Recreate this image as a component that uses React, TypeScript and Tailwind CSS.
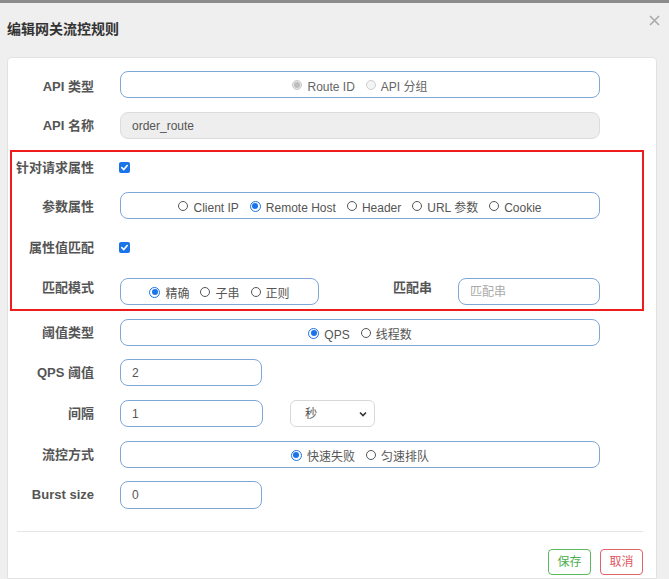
import React from "react";

const font = { fontFamily: '"Liberation Sans", Arial, "Noto Sans CJK SC", sans-serif' };

function Radio({ checked, disabled, label }: { checked?: boolean; disabled?: boolean; label: string }) {
  let circle: React.ReactNode;
  if (disabled) {
    circle = checked ? (
      <span className="w-[10px] h-[10px] rounded-full border border-[#c8c8c8] bg-[#e8e8e8] flex items-center justify-center">
        <span className="w-[6px] h-[6px] rounded-full bg-[#bdbdbd]" />
      </span>
    ) : (
      <span className="w-[10px] h-[10px] rounded-full border border-[#cfcfcf] bg-[#f4f4f4]" />
    );
  } else {
    circle = checked ? (
      <span className="w-[11px] h-[11px] rounded-full border-[1.5px] border-[#1a73e8] bg-white flex items-center justify-center">
        <span className="w-[6px] h-[6px] rounded-full bg-[#1a73e8]" />
      </span>
    ) : (
      <span className="w-[10px] h-[10px] rounded-full border border-[#555] bg-white" />
    );
  }
  return (
    <span className="flex items-center gap-[5px]">
      <span className="-translate-y-[2px] flex">{circle}</span>
      <span className={disabled ? "text-[#666]" : "text-[#555]"}>{label}</span>
    </span>
  );
}

function Checkbox() {
  return (
    <span className="w-[11px] h-[11px] rounded-[2px] bg-[#1a73e8] flex items-center justify-center">
      <svg width="9" height="9" viewBox="0 0 10 10">
        <path d="M2 5.2 L4.2 7.3 L8 2.8" fill="none" stroke="white" strokeWidth="1.8" strokeLinecap="round" strokeLinejoin="round" />
      </svg>
    </span>
  );
}

function Label({ children, w = "w-[86px]", extra = "" }: { children: React.ReactNode; w?: string; extra?: string }) {
  return (
    <div className={`${w} ${extra} shrink-0 text-right text-[13px] font-bold text-[#555] whitespace-nowrap`}>{children}</div>
  );
}

function RadioBox({ children, w = "w-[480px]" }: { children: React.ReactNode; w?: string }) {
  return (
    <div className={`${w} h-[27px] rounded-[8px] border border-[#7fa7d6] bg-white flex items-center justify-center gap-[11px] pt-[5px] text-[12px]`}>
      {children}
    </div>
  );
}

function TextBox({ value, placeholder, w = "w-[142px]", h = "h-[27px]" }: { value?: string; placeholder?: string; w?: string; h?: string }) {
  return (
    <div className={`${w} ${h} rounded-[8px] border border-[#7fa7d6] bg-white flex items-center px-[11px] text-[12px]`}>
      {value ? <span className="text-[#555]">{value}</span> : <span className="text-[#aaa]">{placeholder}</span>}
    </div>
  );
}

export default function App() {
  return (
    <div className="w-[669px] h-[579px] overflow-hidden bg-[#efefef] border-t-[3px] border-[#8c8c8c] flex flex-col" style={font}>
      <div className="h-[54px] shrink-0 flex items-start justify-between pl-[7px] pr-[9px]">
        <div className="mt-[16px] text-[14px] font-bold text-[#333]">编辑网关流控规则</div>
        <svg className="mt-[12px]" width="11" height="11" viewBox="0 0 11 11">
          <path d="M1 1 L10 10 M10 1 L1 10" stroke="#aaa" strokeWidth="1.6" />
        </svg>
      </div>
      <div className="ml-[7px] w-[650px] flex-1 bg-white border border-[#e2e2e2] rounded-t-[4px] flex flex-col pt-[13px]">
        {/* API 类型 */}
        <div className="flex items-center gap-[26px] h-[27px]">
          <Label extra="pt-[4px]">API 类型</Label>
          <RadioBox>
            <Radio checked disabled label="Route ID" />
            <Radio disabled label="API 分组" />
          </RadioBox>
        </div>
        {/* API 名称 */}
        <div className="flex items-center gap-[26px] h-[27px] mt-[14px]">
          <Label>API 名称</Label>
          <div className="w-[480px] h-[27px] rounded-[8px] border border-[#dcdcdc] bg-[#eeeeee] flex items-center px-[11px] text-[12px] text-[#555]">
            order_route
          </div>
        </div>
        {/* red box */}
        <div className="mt-[11px] ml-[2px] w-[634px] border-2 border-[#f01c1c] flex flex-col pb-[4px]">
          <div className="flex items-center gap-[26px] h-[27px] mt-[2px]">
            <Label w="w-[82px]">针对请求属性</Label>
            <span className="-translate-x-[1px]"><Checkbox /></span>
          </div>
          <div className="flex items-center gap-[26px] h-[27px] mt-[11px]">
            <Label w="w-[82px]" extra="pt-[2px]">参数属性</Label>
            <RadioBox>
              <Radio label="Client IP" />
              <Radio checked label="Remote Host" />
              <Radio label="Header" />
              <Radio label="URL 参数" />
              <Radio label="Cookie" />
            </RadioBox>
          </div>
          <div className="flex items-center gap-[26px] h-[27px] mt-[15px]">
            <Label w="w-[82px]">属性值匹配</Label>
            <span className="-translate-x-[1px]"><Checkbox /></span>
          </div>
          <div className="flex items-center h-[27px] mt-[17px]">
            <Label w="w-[82px]" extra="-translate-y-[4px]">匹配模式</Label>
            <div className="ml-[26px]">
              <RadioBox w="w-[199px]">
                <Radio checked label="精确" />
                <Radio label="子串" />
                <Radio label="正则" />
              </RadioBox>
            </div>
            <Label w="w-[113px]" extra="-translate-y-[4px]">匹配串</Label>
            <div className="ml-[26px]">
              <TextBox placeholder="匹配串" />
            </div>
          </div>
        </div>
        {/* 阈值类型 */}
        <div className="flex items-center gap-[26px] h-[27px] mt-[8px]">
          <Label>阈值类型</Label>
          <RadioBox>
            <Radio checked label="QPS" />
            <Radio label="线程数" />
          </RadioBox>
        </div>
        <div className="flex items-center gap-[26px] h-[27px] mt-[13px]">
          <Label>QPS 阈值</Label>
          <TextBox value="2" />
        </div>
        <div className="flex items-center h-[27px] mt-[14px]">
          <Label>间隔</Label>
          <div className="ml-[26px]">
            <TextBox value="1" w="w-[143px]" />
          </div>
          <div className="ml-[27px] w-[85px] h-[27px] rounded-[6px] border border-[#d8d8d8] bg-white flex items-center justify-between pl-[14px] pr-[7px] text-[12px] text-[#555]">
            <span>秒</span>
            <svg width="8" height="6" viewBox="0 0 8 6">
              <path d="M1 1.5 L4 4.5 L7 1.5" fill="none" stroke="#333" strokeWidth="1.6" />
            </svg>
          </div>
        </div>
        <div className="flex items-center gap-[26px] h-[27px] mt-[14px]">
          <Label>流控方式</Label>
          <RadioBox>
            <Radio checked label="快速失败" />
            <Radio label="匀速排队" />
          </RadioBox>
        </div>
        <div className="flex items-center gap-[26px] h-[28px] mt-[13px]">
          <Label>Burst size</Label>
          <TextBox value="0" h="h-[28px]" />
        </div>
        <div className="mt-[22px] ml-[9px] mr-[13px] h-px bg-[#e5e5e5]" />
        <div className="mt-[17px] flex justify-end gap-[9px] pr-[13px]">
          <div className="w-[43px] h-[26px] rounded-[4px] border border-[#5cb85c] text-[#4cae4c] text-[12px] flex items-center justify-center">保存</div>
          <div className="w-[43px] h-[26px] rounded-[4px] border border-[#e0636a] text-[#e05560] text-[12px] flex items-center justify-center">取消</div>
        </div>
      </div>
    </div>
  );
}
